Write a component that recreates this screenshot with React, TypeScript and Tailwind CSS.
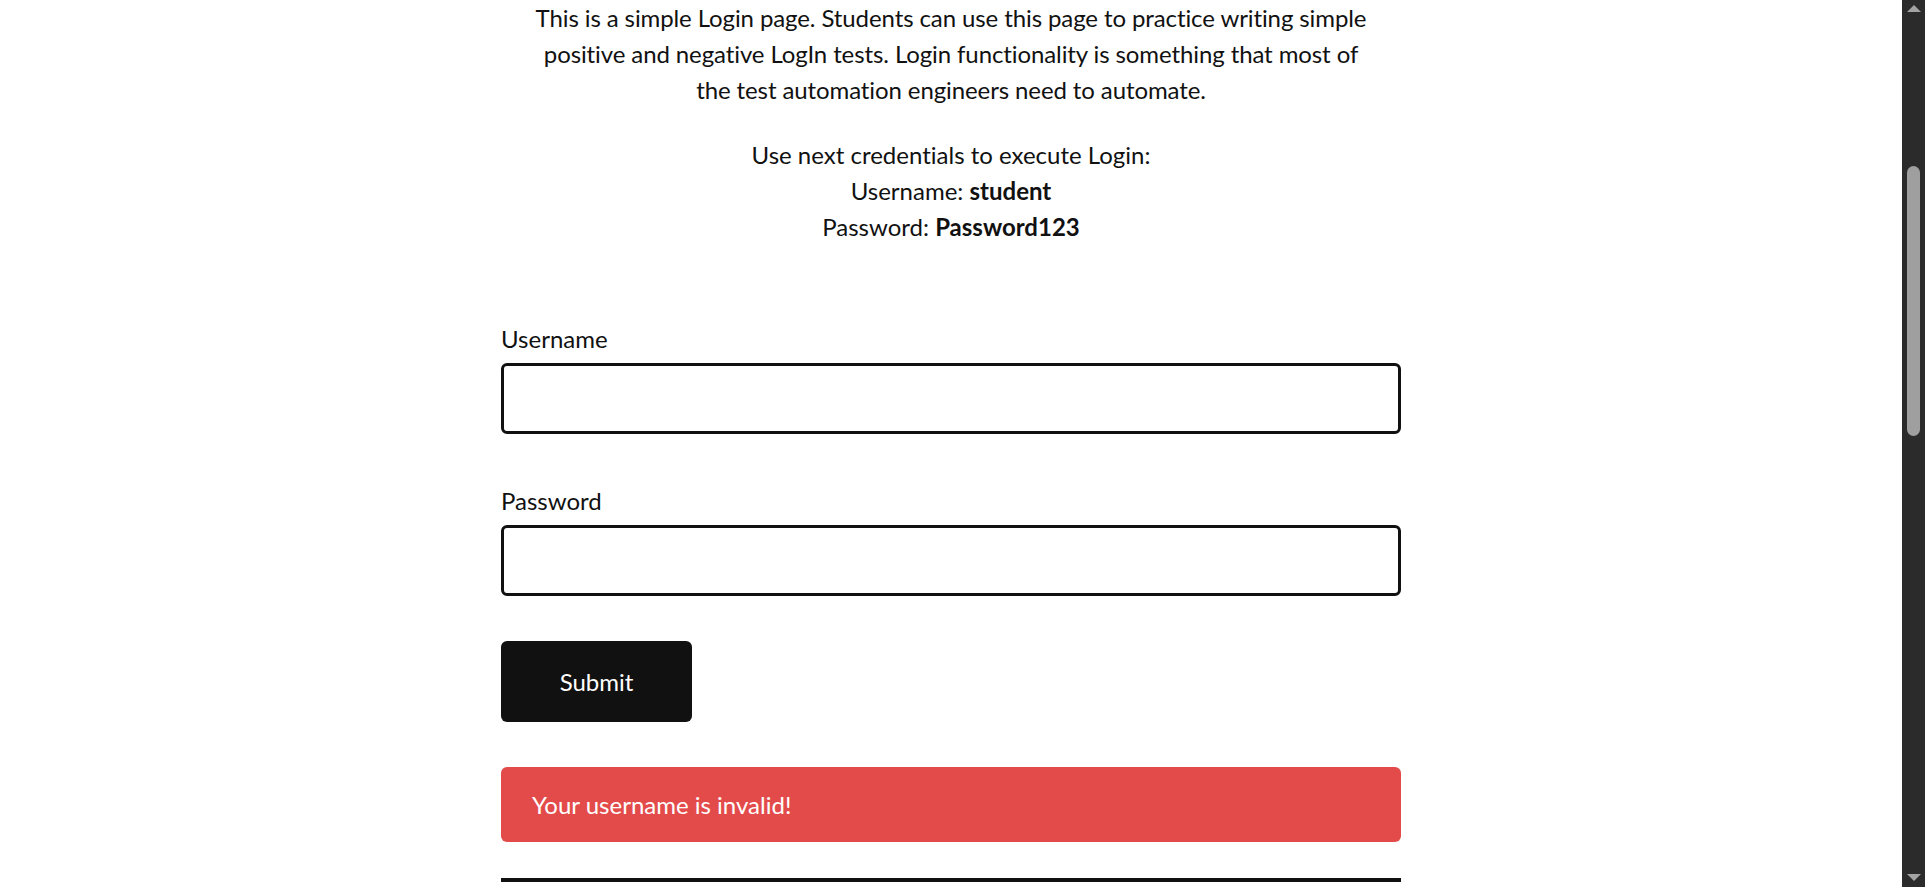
import React from "react";

export default function App() {
  return (
    <div className="flex h-[887px] w-full overflow-hidden bg-white text-[#111] [font-variant-ligatures:none]" style={{ fontFamily: "Lato, 'Noto Sans', sans-serif" }}>
      <main className="flex-1">
        <div className="mx-auto w-[900px]">
          <p className="text-center text-[24px] leading-[36px] tracking-[-0.1px]">
            This is a simple Login page. Students can use this page to practice writing simple
            <br />
            positive and negative LogIn tests. Login functionality is something that most of
            <br />
            the test automation engineers need to automate.
          </p>
          <p className="mt-[29px] text-center text-[24px] leading-[36px]">
            Use next credentials to execute Login:
            <br />
            Username: <b className="font-bold">student</b>
            <br />
            Password: <b className="font-bold">Password123</b>
          </p>
          <form className="mt-[76px] flex flex-col" onSubmit={(e) => e.preventDefault()}>
            <label htmlFor="username" className="text-[24px] leading-[36px]">Username</label>
            <input id="username" type="text" className="mt-[6px] h-[71px] w-full rounded-[6px] border-[3px] border-[#111] bg-white px-4 text-[24px] outline-none" />
            <label htmlFor="password" className="mt-[49px] text-[24px] leading-[36px]">Password</label>
            <input id="password" type="password" className="mt-[6px] h-[71px] w-full rounded-[6px] border-[3px] border-[#111] bg-white px-4 text-[24px] outline-none" />
            <button type="submit" className="mt-[45px] h-[81px] w-[191px] rounded-[6px] bg-[#111] text-[24px] text-white">Submit</button>
          </form>
          <div className="mt-[45px] flex h-[75px] items-center rounded-[6px] bg-[#e34b4b] px-[31px] text-[24px] text-white">
            Your username is invalid!
          </div>
          <div className="mt-[36px] h-[4px] w-full bg-[#111]" />
        </div>
      </main>
      <div className="flex h-full w-[23px] flex-col items-center bg-[#2b2b2b]">
        <div className="mt-[5px] h-0 w-0 border-x-[7px] border-b-[7px] border-x-transparent border-b-[#a3a3a3]" />
        <div className="mt-[154px] h-[270px] w-[13px] rounded-full bg-[#9f9f9f]" />
        <div className="mt-auto mb-[6px] h-0 w-0 border-x-[7px] border-t-[7px] border-x-transparent border-t-[#a3a3a3]" />
      </div>
    </div>
  );
}
